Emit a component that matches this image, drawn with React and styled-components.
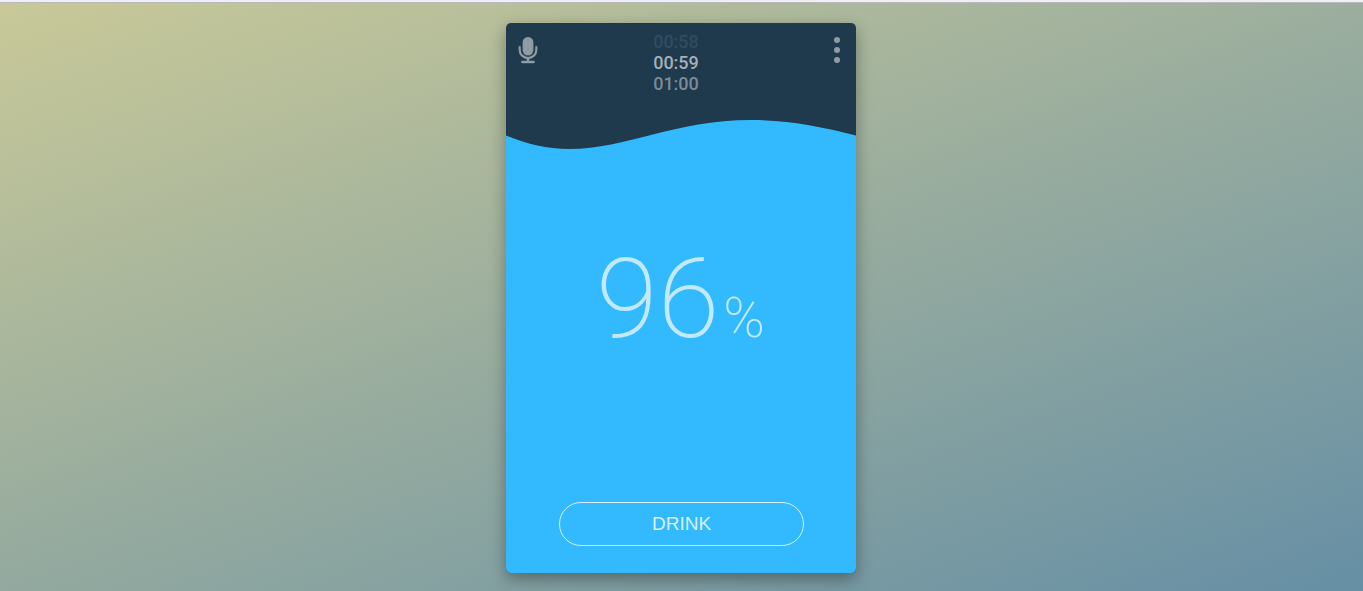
import React from "react";
import styled, { createGlobalStyle } from "styled-components";

const GlobalStyle = createGlobalStyle`
  * { box-sizing: border-box; }
  body { margin: 0; font-family: Roboto, "Liberation Sans", sans-serif; }
`;

const Page = styled.main`
  min-height: 100vh;
  display: flex;
  flex-direction: column;
  background: linear-gradient(160deg, #c9c998 0%, #668fa5 100%);
`;

const TopEdge = styled.div`
  height: 3px;
  background: #f0f0f2;
  border-bottom: 1px solid #b8b8c0;
`;

const Stage = styled.div`
  flex: 1;
  display: flex;
  justify-content: center;
  align-items: flex-start;
  padding: 20px 17px 18px 16px;
`;

const Card = styled.section`
  width: 100%;
  max-width: 350px;
  min-height: 550px;
  display: flex;
  flex-direction: column;
  border-radius: 5px;
  overflow: hidden;
  background: #1f394d;
  box-shadow: 0 6px 16px rgba(0, 0, 0, 0.35);
`;

const Header = styled.header`
  display: flex;
  justify-content: space-between;
  align-items: flex-start;
  height: 96px;
  padding: 8px 12px 0;
`;

const IconButton = styled.button`
  display: flex;
  justify-content: ${(p) => (p.$end ? "flex-end" : "flex-start")};
  width: 36px;
  padding: 5px 0 0;
  border: 0;
  background: none;
  color: #8f9ca6;
  cursor: pointer;
`;

const Times = styled.ol`
  margin: 0;
  padding: 0 10px 0 0;
  list-style: none;
  font-size: 18px;
  font-weight: 500;
  line-height: 21px;
`;

const Time = styled.li`
  color: ${(p) => p.$color};
`;

const Wave = styled.svg`
  display: block;
  width: 100%;
  height: 32px;
  flex: none;
`;

const Water = styled.div`
  flex: 1;
  display: flex;
  flex-direction: column;
  align-items: center;
  justify-content: space-between;
  padding: 82px 52px 27px 53px;
  background: #33b9fd;
`;

const Level = styled.p`
  margin: 0;
  padding-right: 2px;
  display: flex;
  align-items: baseline;
  gap: 4px;
  color: #c2eafe;
  font-size: 112px;
  font-weight: 200;
  line-height: 131px;
`;

const Unit = styled.span`
  font-size: 56px;
`;

const DrinkButton = styled.button`
  width: 100%;
  height: 44px;
  border: 1px solid #d6f1ff;
  border-radius: 22px;
  background: none;
  color: #d6f1ff;
  font-family: "Liberation Sans", Arial, sans-serif;
  font-size: 19px;
  cursor: pointer;
`;

export default function App() {
  return (
    <>
      <GlobalStyle />
      <Page>
        <TopEdge />
        <Stage>
          <Card>
            <Header>
              <IconButton aria-label="Voice input">
                <svg width="20" height="28" viewBox="0 0 20 28" fill="none" stroke="currentColor">
                  <rect x="4.600" y="1" width="10.800" height="18.500" rx="5.400" fill="currentColor" stroke="none" />
                  <path d="M1.700 11v3a8.300 8 0 0 0 16.600 0v-3" strokeWidth="2.200" strokeLinecap="round" />
                  <path d="M10 22v4" strokeWidth="2.400" />
                  <path d="M4.300 26h11.400" strokeWidth="2.400" strokeLinecap="round" />
                </svg>
              </IconButton>
              <Times>
                <Time $color="#314b60">00:58</Time>
                <Time $color="#a5b0b8">00:59</Time>
                <Time $color="#7b8b98">01:00</Time>
              </Times>
              <IconButton $end aria-label="More options">
                <svg width="14" height="28" viewBox="0 0 14 28" fill="currentColor">
                  <circle cx="7" cy="4" r="3" />
                  <circle cx="7" cy="14" r="3" />
                  <circle cx="7" cy="24" r="3" />
                </svg>
              </IconButton>
            </Header>
            <Wave viewBox="0 0 350 32" preserveAspectRatio="none" aria-hidden="true">
              <path
                d="M0 16.500C20 25 40 30 63 30C121 30 168 1 245 1C283 1 317 8 350 16.500V32H0Z"
                fill="#33b9fd"
              />
            </Wave>
            <Water>
              <Level>
                96<Unit>%</Unit>
              </Level>
              <DrinkButton>DRINK</DrinkButton>
            </Water>
          </Card>
        </Stage>
      </Page>
    </>
  );
}
